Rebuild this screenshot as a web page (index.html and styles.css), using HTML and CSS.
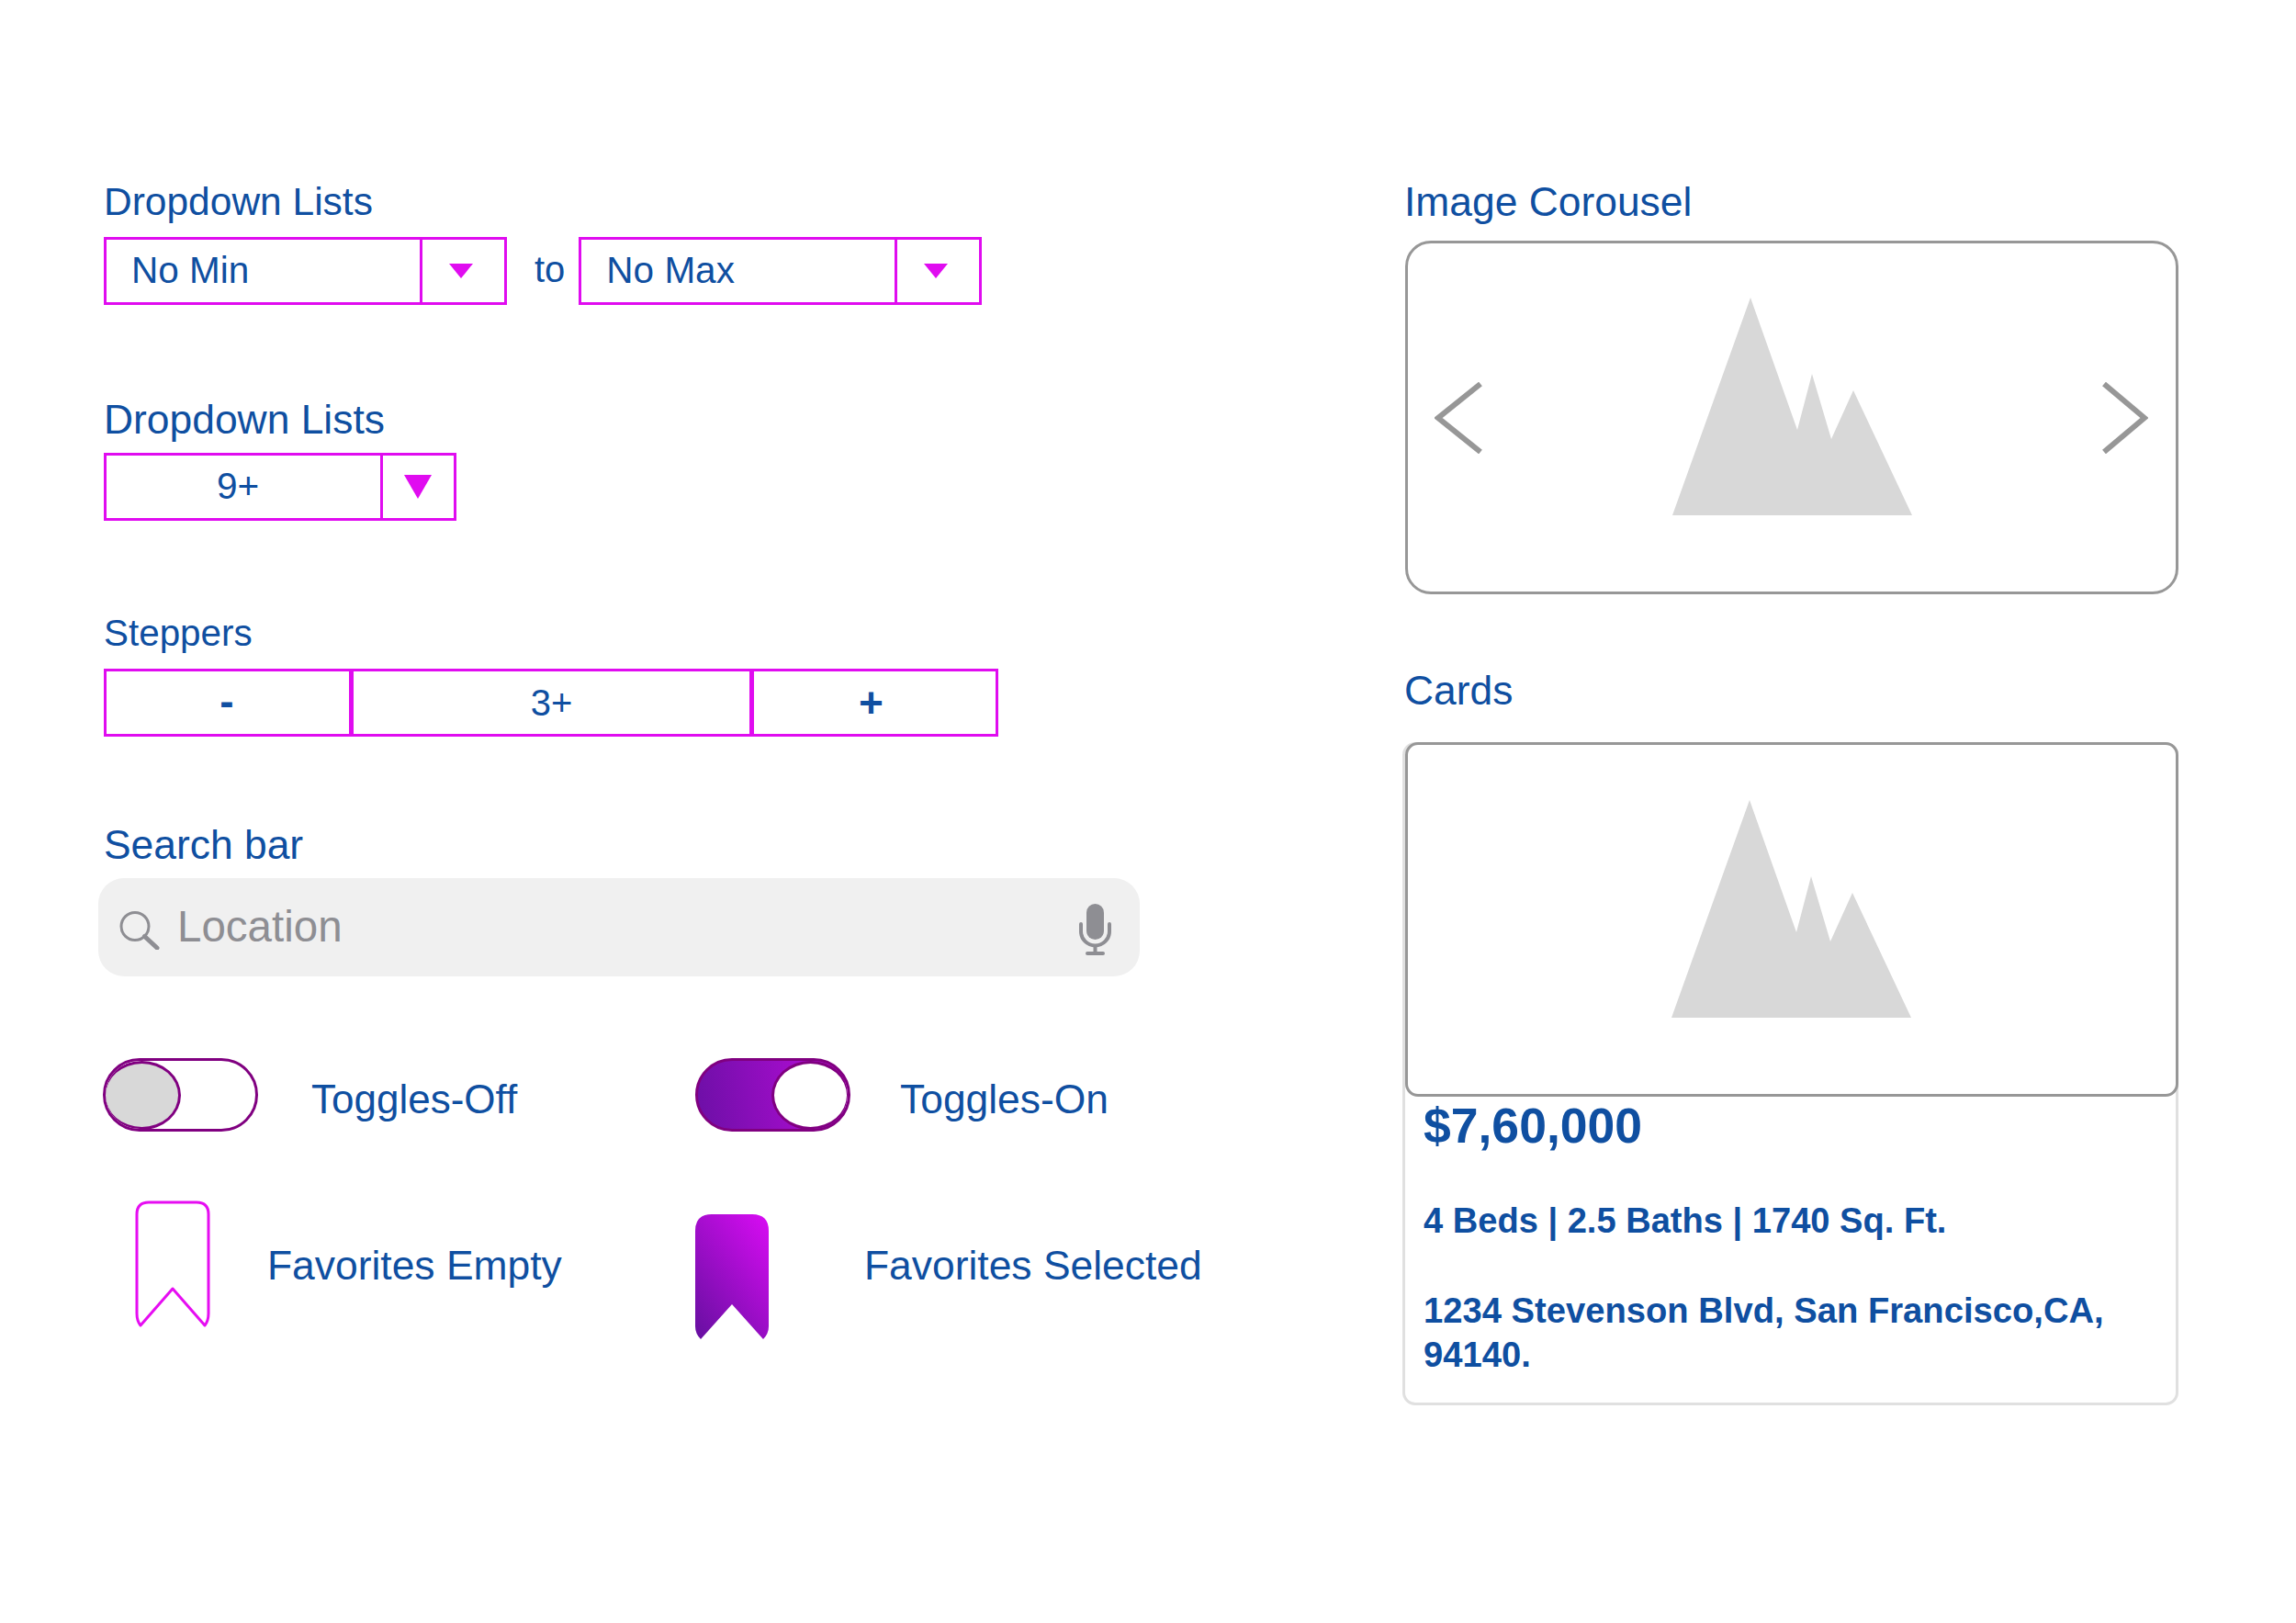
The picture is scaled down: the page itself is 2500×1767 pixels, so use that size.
FILE: index.html
```html
<!DOCTYPE html>
<html lang="en">
<head>
    <meta charset="UTF-8">
    <title>UI Components</title>
    <link rel="stylesheet" href="styles.css">
</head>
<body>

    <div class="page">
        <!-- Left column: form controls -->
        <div class="controls">
            <h2 class="label label-first label-sm">Dropdown Lists</h2>
            <div class="range-row">
                <div class="dropdown dropdown-wide">
                    <div class="dropdown-value">No Min</div>
                    <div class="dropdown-arrow"><span class="triangle"></span></div>
                </div>
                <span class="range-to">to</span>
                <div class="dropdown dropdown-wide">
                    <div class="dropdown-value">No Max</div>
                    <div class="dropdown-arrow"><span class="triangle"></span></div>
                </div>
            </div>

            <h2 class="label label-second">Dropdown Lists</h2>
            <div class="dropdown dropdown-narrow">
                <div class="dropdown-value centered">9+</div>
                <div class="dropdown-arrow"><span class="triangle triangle-lg"></span></div>
            </div>

            <h2 class="label label-steppers">Steppers</h2>
            <div class="stepper">
                <div class="stepper-cell stepper-btn stepper-minus">-</div>
                <div class="stepper-cell stepper-mid">3+</div>
                <div class="stepper-cell stepper-btn stepper-plus">+</div>
            </div>

            <h2 class="label label-search">Search bar</h2>
            <div class="search-bar">
                <svg class="search-icon" width="44" height="42" viewBox="0 0 44 42">
                    <circle cx="17" cy="16.5" r="15" fill="none" stroke="#8e8e93" stroke-width="3"/>
                    <line x1="27.5" y1="27.5" x2="41" y2="40" stroke="#8e8e93" stroke-width="5" stroke-linecap="round"/>
                </svg>
                <span class="search-text">Location</span>
                <svg class="mic-icon" width="36" height="56" viewBox="0 0 36 56">
                    <rect x="8" y="0" width="19" height="39" rx="9.5" fill="#8e8e93"/>
                    <path d="M2 22V30A15.5 15.5 0 0 0 33 30V22" fill="none" stroke="#8e8e93" stroke-width="4" stroke-linecap="round"/>
                    <line x1="17.5" y1="46" x2="17.5" y2="54" stroke="#8e8e93" stroke-width="4"/>
                    <rect x="7" y="52" width="21" height="4" rx="2" fill="#8e8e93"/>
                </svg>
            </div>

            <div class="toggle-row">
                <div class="item item-off">
                    <div class="toggle toggle-off"><span class="knob"></span></div>
                    <span class="item-text toggle-text">Toggles-Off</span>
                </div>
                <div class="item item-on">
                    <div class="toggle toggle-on"><span class="knob"></span></div>
                    <span class="item-text toggle-text">Toggles-On</span>
                </div>
            </div>

            <div class="favorite-row">
                <div class="item item-empty">
                    <svg class="bookmark" width="84" height="140" viewBox="0 0 84 140">
                        <path d="M7 137L42 97L77 137Q81 132 81 124V16Q81 3 68 3H16Q3 3 3 16V124Q3 132 7 137Z" fill="#fff" stroke="#e60df2" stroke-width="3" stroke-linejoin="round"/>
                    </svg>
                    <span class="item-text fav-text">Favorites Empty</span>
                </div>
                <div class="item item-selected">
                    <svg class="bookmark" width="80" height="136" viewBox="0 0 80 136">
                        <defs>
                            <linearGradient id="favFill" x1="0.9" y1="0" x2="0.1" y2="1">
                                <stop offset="0" stop-color="#d40cf0"/>
                                <stop offset="1" stop-color="#6a0fa3"/>
                            </linearGradient>
                        </defs>
                        <path d="M6 136L40 98L74 136Q80 130 80 122V18Q80 0 62 0H18Q0 0 0 18V122Q0 130 6 136Z" fill="url(#favFill)"/>
                    </svg>
                    <span class="item-text fav-text">Favorites Selected</span>
                </div>
            </div>
        </div>

        <!-- Right column: carousel and card -->
        <div class="showcase">
            <h2 class="label label-first">Image Corousel</h2>
            <div class="carousel">
                <svg width="52" height="78" viewBox="0 0 52 78">
                    <polyline points="50,2 4,39 50,76" fill="none" stroke="#979797" stroke-width="6"/>
                </svg>
                <svg class="mountain" width="261" height="237" viewBox="0 0 261 237">
                    <polygon points="85,0 136,144 152,83 173,154 197,101 261,237 0,237" fill="#d8d8d8"/>
                </svg>
                <svg width="50" height="78" viewBox="0 0 50 78">
                    <polyline points="2,2 46,39 2,76" fill="none" stroke="#979797" stroke-width="6"/>
                </svg>
            </div>

            <h2 class="label label-cards">Cards</h2>
            <div class="card">
                <div class="card-image">
                    <svg class="mountain" width="261" height="237" viewBox="0 0 261 237">
                        <polygon points="85,0 136,144 152,83 173,154 197,101 261,237 0,237" fill="#d8d8d8"/>
                    </svg>
                </div>
                <div class="card-body">
                    <p class="price">$7,60,000</p>
                    <p class="specs">4 Beds | 2.5 Baths | 1740 Sq. Ft.</p>
                    <p class="address">1234 Stevenson Blvd, San Francisco,CA, 94140.</p>
                </div>
            </div>
        </div>
    </div>

</body>
</html>
```

FILE: styles.css
```css
/* Basic resets and body styling */
* {
    margin: 0;
    padding: 0;
    box-sizing: border-box;
}

body {
    font-family: "Liberation Sans", Arial, sans-serif;
    background-color: #fff;
    color: #0f4fa1;
    width: 2500px;
    height: 1767px;
    overflow: hidden;
}

.page {
    display: flex;
    padding: 196px 128px 0 113px;
}

.controls {
    width: 1414px;
    flex-shrink: 0;
}

.showcase {
    width: 845px;
    flex-shrink: 0;
}

/* Section labels */
.label {
    font-size: 44.4px;
    font-weight: normal;
    line-height: 48px;
}

.showcase .label {
    margin-left: 2px;
}

.label-sm {
    font-size: 42.5px;
}

.label-first {
    margin-bottom: 14px;
}

.showcase .label-first {
    margin-bottom: 18px;
}

.label-second {
    margin-top: 101px;
    margin-bottom: 12px;
}

.label-steppers {
    font-size: 40.4px;
    margin-top: 98px;
    margin-bottom: 15px;
}

.label-search {
    margin-top: 94px;
    margin-bottom: 12px;
}

.label-cards {
    margin-top: 81px;
    margin-bottom: 32px;
}

/* Dropdowns */
.range-row {
    display: flex;
    align-items: center;
}

.range-to {
    font-size: 40px;
    margin: -4px 15px 0 30px;
}

.dropdown {
    display: flex;
    height: 74px;
    border: 3px solid #e00cf0;
    font-size: 40.5px;
}

.dropdown-wide {
    width: 439px;
}

.dropdown-narrow {
    width: 384px;
}

.dropdown-value {
    flex: 1;
    display: flex;
    align-items: center;
    padding: 0 0 2px 27px;
}

.dropdown-value.centered {
    justify-content: center;
    padding: 0 12px 2px 0;
}

.dropdown-arrow {
    width: 92px;
    border-left: 3px solid #e00cf0;
    display: flex;
    align-items: center;
    justify-content: center;
    padding: 0 6px 0 0;
}

.dropdown-narrow .dropdown-arrow {
    width: 80px;
    padding-right: 5px;
}

.triangle {
    width: 0;
    height: 0;
    border-left: 13px solid transparent;
    border-right: 13px solid transparent;
    border-top: 16px solid #e00cf0;
}

.triangle-lg {
    border-left-width: 15px;
    border-right-width: 15px;
    border-top-width: 26px;
    margin-left: 4px;
}

/* Stepper */
.stepper {
    display: flex;
    height: 74px;
    width: 974px;
}

.stepper-cell {
    display: flex;
    align-items: center;
    justify-content: center;
    border: 3px solid #e00cf0;
    font-size: 40px;
}

.stepper-btn {
    width: 270px;
    font-size: 46px;
    font-weight: bold;
}

.stepper-minus {
    padding: 0 2px 4px 0;
}

.stepper-mid {
    width: 437px;
    margin: 0 -1px;
}

.stepper-plus {
    width: 269px;
    padding-right: 8px;
}

/* Search bar */
.search-bar {
    display: flex;
    align-items: center;
    width: 1134px;
    height: 107px;
    margin-left: -6px;
    padding: 0 30px 0 23px;
    background-color: #f0f0f0;
    border-radius: 28px;
    color: #8e8e93;
}

.search-icon {
    margin-top: 6px;
}

.search-text {
    font-size: 47.5px;
    margin: -2px 0 0 19px;
}

.mic-icon {
    margin-left: auto;
    margin-top: 4px;
}

/* Toggles */
.toggle-row {
    display: flex;
    margin-top: 89px;
    height: 80px;
}

.item {
    display: flex;
}

.item-off,
.item-empty {
    width: 644px;
}

.item-text {
    font-size: 44.4px;
    line-height: 48px;
}

.toggle-text {
    font-size: 44px;
    margin-top: 21px;
}

.toggle {
    width: 169px;
    height: 80px;
    border: 3px solid #800080;
    border-radius: 40px;
    display: flex;
    align-items: center;
    flex-shrink: 0;
    overflow: hidden;
}

.item-off .toggle {
    margin-left: -1px;
}

.item-off .toggle-text {
    margin-left: 58px;
}

.item-on .toggle-text {
    margin-left: 54px;
    font-size: 44.4px;
}

.toggle-off {
    background-color: #fff;
}

.toggle-on {
    background: linear-gradient(80deg, #6c0fa6, #bd0cdc);
    justify-content: flex-end;
}

.knob {
    width: 85px;
    height: 75px;
    border: 3px solid #800080;
    border-radius: 50%;
    flex-shrink: 0;
}

.toggle-off .knob {
    background-color: #d8d8d8;
    margin-left: -3px;
}

.toggle-on .knob {
    background-color: #fff;
    margin-right: -2px;
}

/* Favorites */
.favorite-row {
    display: flex;
    margin-top: 74px;
}

.item-empty .bookmark {
    margin-left: 33px;
    flex-shrink: 0;
}

.item-selected .bookmark {
    margin-top: 16px;
    flex-shrink: 0;
}

.fav-text {
    margin-top: 48px;
}

.item-empty .fav-text {
    margin-left: 61px;
}

.item-selected .fav-text {
    margin-left: 104px;
}

/* Carousel */
.carousel {
    display: flex;
    align-items: center;
    justify-content: space-between;
    width: 842px;
    height: 385px;
    margin-left: 3px;
    padding: 0 30px 0 29px;
    border: 3px solid #979797;
    border-radius: 28px;
}

.carousel .mountain {
    margin-bottom: 24px;
}

/* Card */
.card {
    width: 845px;
    height: 722px;
    border: 3px solid #e0e0e0;
    border-radius: 14px;
}

.card-image {
    display: flex;
    align-items: center;
    justify-content: center;
    width: 842px;
    height: 386px;
    margin: -3px -3px 0 0;
    padding-right: 2px;
    background-color: #fff;
    border: 3px solid #979797;
    border-radius: 14px;
}

.card-image .mountain {
    margin-bottom: 24px;
}

.card-body {
    padding: 2px 20px 0 20px;
    font-weight: bold;
}

.price {
    font-size: 53.5px;
    line-height: 60px;
}

.specs {
    font-size: 38.1px;
    line-height: 48px;
    margin-top: 49px;
}

.address {
    font-size: 38.2px;
    line-height: 48px;
    margin-top: 50px;
}
```
